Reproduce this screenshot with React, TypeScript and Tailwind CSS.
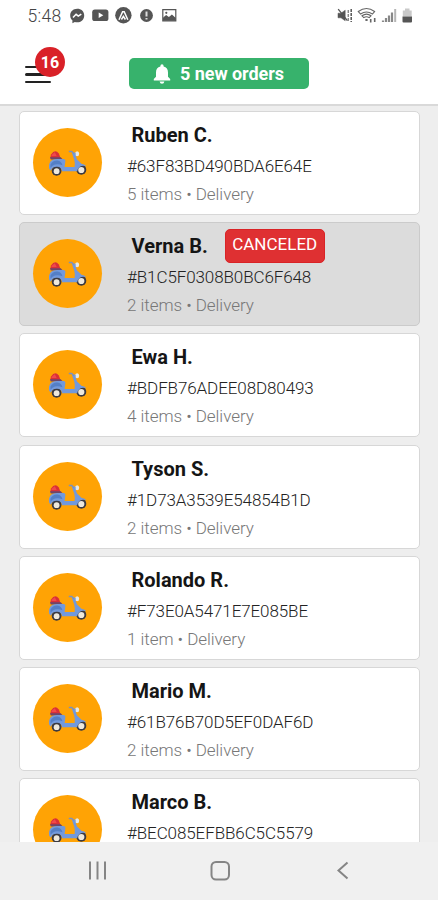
type Order = { name: string; id: string; meta: string; canceled?: boolean };

const orders: Order[] = [
  { name: "Ruben C.", id: "#63F83BD490BDA6E64E", meta: "5 items • Delivery" },
  { name: "Verna B.", id: "#B1C5F0308B0BC6F648", meta: "2 items • Delivery", canceled: true },
  { name: "Ewa H.", id: "#BDFB76ADEE08D80493", meta: "4 items • Delivery" },
  { name: "Tyson S.", id: "#1D73A3539E54854B1D", meta: "2 items • Delivery" },
  { name: "Rolando R.", id: "#F73E0A5471E7E085BE", meta: "1 item • Delivery" },
  { name: "Mario M.", id: "#61B76B70D5EF0DAF6D", meta: "2 items • Delivery" },
  { name: "Marco B.", id: "#BEC085EFBB6C5C5579", meta: "" },
];

function Scooter() {
  return (
    <svg width="40" height="28" viewBox="0 0 40 28" className="mt-[3px] block">
      <circle cx="8.6" cy="20.8" r="4.9" fill="#3b3a42" />
      <circle cx="8.6" cy="21.2" r="2.9" fill="#eee8dc" />
      <circle cx="33.3" cy="19.8" r="5" fill="#3b3a42" />
      <circle cx="33.3" cy="20" r="3.1" fill="#eee8dc" />
      <path d="M2.2 8.2 3 4.5Q7-1.5 10.8 3.5L12.6 8.2Z" fill="#d92f38" />
      <path d="M4 4.5 6.8 2.2 8.7 6H3.3Z" fill="#f04a4a" />
      <path d="M2 7.2h10.8l2 2.2H2.8Z" fill="#6e4668" />
      <path d="M1.2 18.7C.3 12.5 3 9 9 9h6.4q2.4.2 1.9 2.7L16.6 17h10q.8-3.6-.4-7.5L24 3.2l2.5-.6 2.5 7q2.3 1.7 4.4 4.2 3 .2 5 2.4-4.1-1.3-6.5.5-2.4 1.7-2.8 4.5H14q-.5-4.3-4.7-4.5-4.8-.5-6.5 4.1Z" fill="#7299dc" />
      <path d="M2.5 14.5Q5 10.2 9.5 10.6q4 .8 5 4.6-4-1.7-7.5-.7-2.8.7-4.5 3.2Z" fill="#547fc6" />
      <path d="m20.8 1.4 3 .2 2 2.2" fill="none" stroke="#7c91bc" strokeWidth="1.5" />
      <ellipse cx="29.1" cy="3.8" rx="2.1" ry="2.5" fill="#e8e9e2" />
      <path d="M25.8 2.8h1.8v5h-1.2Z" fill="#7299dc" />
    </svg>
  );
}

function StatusBar() {
  return (
    <div className="flex h-8 shrink-0 items-center pl-[27.5px] pr-[25px] text-[#555]">
      <span className="w-[42.5px] text-[17.5px] font-light leading-8 tracking-[0.3px] text-[#444]">5:48</span>
      <svg width="108" height="18" viewBox="0 0 108 18" fill="#555">
        <path d="M7.2 1.7C3.2 1.7.2 4.5.2 8.4c0 2 .8 3.7 2.2 4.9v2.9l2.4-1.3q1.1.4 2.4.4c4 0 7-2.8 7-6.9s-3-6.7-7-6.7Z" />
        <path d="m3 10.5 3.1-3.2 2.2 1.8 3-2" fill="none" stroke="#fff" strokeWidth="1.6" />
        <rect x="22.2" y="2.6" width="16.2" height="11.4" rx="2.6" />
        <path d="m28.7 5.5 4.6 2.8-4.6 2.8Z" fill="#fff" />
        <circle cx="53.4" cy="8.3" r="8.2" />
        <path d="m49 12.8 3.6-8.1h1.6l3.6 8.1M51.4 12.5l2-3.2 2 3.2" fill="none" stroke="#fff" strokeWidth="1.5" />
        <circle cx="76.5" cy="8.5" r="6.4" />
        <path d="M76.5 4.6v5M76.5 11v1.6" stroke="#ddd" strokeWidth="2" />
        <path d="M92.8 2.7h13v11.2h-13Z" fill="none" stroke="#555" strokeWidth="1.2" />
        <path d="m93 13.7v-3l3.1-2.8 2.8 2.2 3-2.7 3.9 3.5v2.8Z" />
        <circle cx="96.3" cy="5.8" r="1.1" />
      </svg>
      <svg width="76" height="18" viewBox="0 0 76 18" className="ml-auto">
        <g fill="#555" stroke="#555">
          <path d="M1 6.2h3l4.2-3v10.6l-4.2-3H1Z" strokeWidth=".5" />
          <path d="m1.2 2.2 9.2 11.5" strokeWidth="1.3" />
          <path d="M11.2 3v11" fill="none" strokeWidth="1" strokeDasharray="3 1" />
          <path d="M14.2 2v13" fill="none" strokeWidth="1.5" strokeDasharray="3 1" />
        </g>
        <g fill="none" stroke="#666" strokeWidth="1.1">
          <path d="M21.3 4.5q8.2-6 16.3 0l-2.2 2.5q-6-4-11.8 0ZM25 8.8q4.6-3.4 9 0l-1.8 1.8q-2.8-1.8-5.4 0Z" />
          <path d="M29.5 12v2" strokeWidth="2.2" />
          <path d="M33.7 12v3.5M37.7 15v-4" strokeWidth="1.6" />
        </g>
        <path d="M46 15v-1.5M49 15v-4M52 15V8.5M55 15V5.5" stroke="#888" strokeWidth="2.2" />
        <path d="M58.2 15V2" stroke="#b5b5b5" strokeWidth="2" />
        <path d="M65.8 3.5h2.2V1.5h4.5v2h2.2v6h-8.9Z" fill="#c9c9c9" />
        <path d="M65.5 9.5h9.5v4.9q0 1-1 1h-7.5q-1 0-1-1Z" fill="#555" />
      </svg>
    </div>
  );
}

function Header() {
  return (
    <header className="flex h-[72px] shrink-0 items-start">
      <button aria-label="Menu" className="relative ml-[24.5px] mt-[33.5px] flex w-[26.5px] flex-col gap-[5px]">
        <span className="h-[2.5px] rounded-sm bg-[#222]" />
        <span className="h-[2.5px] rounded-sm bg-[#222]" />
        <span className="h-[2.5px] rounded-sm bg-[#222]" />
        <span className="absolute -top-[18.5px] left-[10.5px] flex size-[30px] items-center justify-center rounded-full bg-[#d92128] pt-px text-[16px] font-bold text-white">16</span>
      </button>
      <button className="ml-[78px] mt-[26px] flex h-[31px] w-[180px] items-center rounded-[5px] bg-[#37b26c] pl-[24px] text-white">
        <svg width="18" height="20" viewBox="0 0 18 20" fill="#fff">
          <path d="M9 .3a1.6 1.6 0 0 0-1.6 1.6v.7C4.5 3.2 3 5.5 3 8.5v4.2L.8 15.1V16.5h16.4v-1.4L15 12.7V8.5c0-3-1.5-5.3-4.4-5.9v-.7A1.6 1.6 0 0 0 9 .3ZM6.6 17.5h4.8Q11 19.7 9 19.7t-2.4-2.2Z" />
        </svg>
        <span className="ml-[9px] whitespace-nowrap text-[18px] font-bold leading-[31px] tracking-[-0.05px]">5 new orders</span>
      </button>
    </header>
  );
}

function OrderCard({ order }: { order: Order }) {
  return (
    <article className={`flex h-[104px] shrink-0 rounded-[5px] border pl-[13px] ${order.canceled ? "border-[#cbcbcb] bg-[#dcdcdc]" : "border-[#d7d7d7] bg-white"}`}>
      <div className="mt-[16px] flex size-[69px] shrink-0 items-center justify-center rounded-full bg-[#ffa305]">
        <Scooter />
      </div>
      <div className="ml-[25px] flex flex-col whitespace-nowrap">
        <div className="flex h-[40px] items-start pl-[4.5px]">
          <h2 className="mt-[10px] text-[20px] font-bold leading-[27px] text-[#151515]">{order.name}</h2>
          {order.canceled && (
            <span className="ml-[17px] mt-[6px] h-[34px] w-[100px] shrink-0 rounded-[5px] border border-[#d92326] bg-[#df3032] text-center text-[17px] leading-[29px] text-white">CANCELED</span>
          )}
        </div>
        <p className="h-[28px] text-[17px] font-light leading-[29px] tracking-[-0.1px] text-[#222]">{order.id}</p>
        {order.meta && (
          <p className="h-[28px] text-[17px] font-light leading-[28px] tracking-[-0.04px] text-[#777]">{order.meta}</p>
        )}
      </div>
    </article>
  );
}

export default function App() {
  return (
    <div className="flex h-[900px] w-[438px] flex-col overflow-hidden bg-white font-[Roboto,sans-serif]">
      <StatusBar />
      <Header />
      <main className="flex min-h-0 flex-1 flex-col gap-[7.25px] overflow-hidden border-t-2 border-[#d9d9d9] bg-[#eeeeee] pl-[19px] pr-[18px] pt-[4.75px]">
        {orders.map((o) => <OrderCard key={o.id} order={o} />)}
      </main>
      <nav className="flex h-[58px] shrink-0 items-center bg-[#f0f0f0] pl-[88px]">
        <svg width="264" height="24" viewBox="0 0 264 24" fill="none" stroke="#858585" strokeWidth="2">
          <path d="M2 2.5v18M9.5 2.5v18M17 2.5v18" />
          <rect x="123.5" y="3" width="17.5" height="17.5" rx="4.5" />
          <path d="m259.5 3.5-9 8 9 8" />
        </svg>
      </nav>
    </div>
  );
}
